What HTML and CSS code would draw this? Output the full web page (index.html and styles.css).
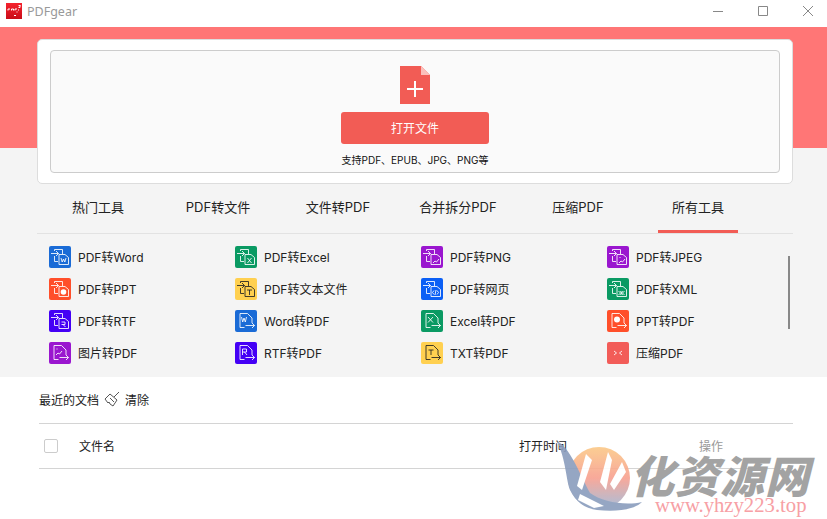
FILE: index.html
```html
<!DOCTYPE html>
<html lang="zh-CN">

<head>
    <meta charset="UTF-8">
    <title>PDFgear</title>
    <link rel="stylesheet" href="styles.css">
</head>

<body>
    <svg class="defs" width="0" height="0">
        <symbol id="to-file" viewBox="0 0 22 22">
            <path d="M2 7.500h7.500M7 5l2.500 2.500L7 10M5.500 5V3.500h8V8M5.500 10v5.500H9M10 8.500h6l3.500 3v7H10z" fill="none" stroke="currentColor" stroke-opacity="0.85"/>
        </symbol>
        <symbol id="from-file" viewBox="0 0 22 22">
            <path d="M9.500 17.500H5V3.500h7.500L17 8v5M10.500 15.500h9M17 13l2.500 2.500L17 18" fill="none" stroke="currentColor" stroke-opacity="0.85"/>
        </symbol>
    </svg>

    <header class="titlebar">
        <svg class="logo" viewBox="0 0 16 16">
            <defs>
                <linearGradient id="logo-red" x1="0" y1="0" x2="0" y2="1">
                    <stop offset="0" stop-color="#f5222d"/>
                    <stop offset="1" stop-color="#c90d18"/>
                </linearGradient>
            </defs>
            <rect width="16" height="16" fill="url(#logo-red)"/>
            <path d="M2 7.500V6h2M5.500 7.500V6h2v1.500M9 7.500V6h2M12.500 2.500h2M14 2.500v2h-1.500M12 7h1M10.500 9h1M8 12.500h2" fill="none" stroke="#fff"/>
        </svg>
        <span class="app-name">PDFgear</span>
        <div class="win-controls">
            <svg viewBox="0 0 12 12"><path d="M1 6.500h10"/></svg>
            <svg viewBox="0 0 12 12"><path d="M1.500 1.500h9v9h-9z"/></svg>
            <svg viewBox="0 0 12 12"><path d="M1 1l10 10M11 1L1 11"/></svg>
        </div>
    </header>

    <main class="top">
        <section class="card">
            <div class="drop-zone">
                <svg class="doc-icon" viewBox="0 0 30 38">
                    <path d="M0 0h21l9 9v29H0z" fill="#f25c55"/>
                    <path d="M21 0l9 9h-9z" fill="#fbc0bb"/>
                    <path d="M7 23h16M15 15v16" stroke="#fff" stroke-width="2"/>
                </svg>
                <button class="open-btn">打开文件</button>
                <p class="support">支持PDF、EPUB、JPG、PNG等</p>
            </div>
        </section>

        <nav>
            <ul class="tabs">
                <li>热门工具</li>
                <li>PDF转文件</li>
                <li>文件转PDF</li>
                <li>合并拆分PDF</li>
                <li>压缩PDF</li>
                <li class="active">所有工具</li>
            </ul>
        </nav>

        <div class="tools">
            <div class="tool">
                <svg class="tile blue" viewBox="0 0 22 22"><use href="#to-file"/><path d="M12 12l1.200 4 1.300-3 1.300 3 1.200-4" class="glyph"/></svg>
                <span>PDF转Word</span>
            </div>
            <div class="tool">
                <svg class="tile green" viewBox="0 0 22 22"><use href="#to-file"/><path d="M12.500 12l4 5M16.500 12l-4 5" class="glyph"/></svg>
                <span>PDF转Excel</span>
            </div>
            <div class="tool">
                <svg class="tile purple" viewBox="0 0 22 22"><use href="#to-file"/><path d="M12 17l2-2 1.500 1 2.500-3" class="glyph"/></svg>
                <span>PDF转PNG</span>
            </div>
            <div class="tool">
                <svg class="tile purple" viewBox="0 0 22 22"><use href="#to-file"/><path d="M12 17l2-2 1.500 1 2.500-3M12.500 11.500h1" class="glyph"/></svg>
                <span>PDF转JPEG</span>
            </div>

            <div class="tool">
                <svg class="tile orange" viewBox="0 0 22 22"><use href="#to-file"/><circle cx="14.500" cy="14" r="2.800" fill="#fff"/></svg>
                <span>PDF转PPT</span>
            </div>
            <div class="tool">
                <svg class="tile yellow" viewBox="0 0 22 22"><use href="#to-file"/><path d="M12 12h5M14.500 12v5" class="glyph"/></svg>
                <span>PDF转文本文件</span>
            </div>
            <div class="tool">
                <svg class="tile bright" viewBox="0 0 22 22"><use href="#to-file"/><path d="M13 12.500l-1.500 2 1.500 2M16 12.500l1.500 2-1.500 2M15 12l-1 5" class="glyph"/></svg>
                <span>PDF转网页</span>
            </div>
            <div class="tool">
                <svg class="tile green" viewBox="0 0 22 22"><use href="#to-file"/><path d="M11.500 13l2 2-2 2M17.500 13l-2 2 2 2M13.500 13l2 4M15.500 13l-2 4" class="glyph"/></svg>
                <span>PDF转XML</span>
            </div>

            <div class="tool">
                <svg class="tile violet" viewBox="0 0 22 22"><use href="#to-file"/><path d="M12.500 12h3.500v2.500h-3.500M14 14.500l2.500 2.500" class="glyph"/></svg>
                <span>PDF转RTF</span>
            </div>
            <div class="tool">
                <svg class="tile blue" viewBox="0 0 22 22"><use href="#from-file"/><path d="M6.500 7l1.200 5 1.300-4 1.300 4 1.200-5" class="glyph"/></svg>
                <span>Word转PDF</span>
            </div>
            <div class="tool">
                <svg class="tile green" viewBox="0 0 22 22"><use href="#from-file"/><path d="M7 7l5 5.500M12 7l-5 5.500" class="glyph"/></svg>
                <span>Excel转PDF</span>
            </div>
            <div class="tool">
                <svg class="tile orange" viewBox="0 0 22 22"><use href="#from-file"/><circle cx="10" cy="9.500" r="3" fill="#fff"/></svg>
                <span>PPT转PDF</span>
            </div>

            <div class="tool">
                <svg class="tile purple" viewBox="0 0 22 22"><use href="#from-file"/><path d="M7 13l2-2 1.500 1 2.500-3M7.500 7h1" class="glyph"/></svg>
                <span>图片转PDF</span>
            </div>
            <div class="tool">
                <svg class="tile violet" viewBox="0 0 22 22"><use href="#from-file"/><path d="M7.500 7h4v3h-4M7.500 7v6M9.500 10l2.500 3" class="glyph"/></svg>
                <span>RTF转PDF</span>
            </div>
            <div class="tool">
                <svg class="tile yellow" viewBox="0 0 22 22"><use href="#from-file"/><path d="M7.500 8h5M10 8v5" class="glyph"/></svg>
                <span>TXT转PDF</span>
            </div>
            <div class="tool">
                <svg class="tile red" viewBox="0 0 22 22"><path d="M7 9l2.500 2L7 13M15 9l-2.500 2 2.500 2" class="glyph"/></svg>
                <span>压缩PDF</span>
            </div>

            <div class="scrollbar"></div>
        </div>
    </main>

    <section class="recent">
        <div class="recent-head">
            <span>最近的文档</span>
            <svg class="broom" viewBox="0 0 16 16">
                <path d="M10 6l5-5M6 3l7 6-4 6-3-2-1-2-1 1-3-4zM6 7l4 4" fill="none" stroke="#555"/>
            </svg>
            <span>清除</span>
        </div>
        <div class="file-row">
            <span class="checkbox"></span>
            <span class="col-name">文件名</span>
            <span class="col-time">打开时间</span>
            <span class="col-action">操作</span>
        </div>
    </section>

    <!-- watermark sits over the table -->
    <div class="watermark">
        <svg class="wm-logo" viewBox="0 0 90 76">
            <defs>
                <linearGradient id="planet" x1="0" y1="0" x2="0" y2="1">
                    <stop offset="0" stop-color="#fbc987"/>
                    <stop offset="0.5" stop-color="#f8a090"/>
                    <stop offset="1" stop-color="#9fb9d8"/>
                </linearGradient>
            </defs>
            <circle cx="43" cy="38" r="31" fill="url(#planet)"/>
            <path d="M1 1C14 8 22 30 34 53 46 62 70 66 86 62 78 70 60 72 41 70 28 68 20 62 14 50 10 40 10 20 1 1z" fill="#8a9dbd"/>
            <path d="M30 14L21 46 26 50 36 20zM52 12L44 42 50 50 56 20zM66 22L54 44 58 50 70 32zM24 54L48 66 38 68 22 60z" fill="#fff"/>
        </svg>
        <div class="wm-text">
            <div class="wm-name">化资源网</div>
            <div class="wm-url">www.yhzy223.top</div>
        </div>
    </div>
</body>

</html>
```

FILE: styles.css
```css
* {
    padding: 0;
    margin: 0;
    box-sizing: border-box;
}

body {
    width: 827px;
    height: 519px;
    overflow: hidden;
    position: relative;
    background-color: white;
    color: #222;
    font-family: Inter, "Noto Sans CJK SC", sans-serif;
    font-size: 12px;
}

.defs {
    position: absolute;
}

.titlebar {
    height: 27px;
    display: flex;
    align-items: flex-start;
    padding: 3px 13px 0 6px;
}

.logo {
    width: 16px;
    height: 16px;
}

.app-name {
    margin-left: 5px;
    color: #999;
    font-family: "Noto Sans", sans-serif;
    font-size: 12.500px;
    line-height: 17px;
}

.win-controls {
    margin-left: auto;
    display: flex;
    gap: 33px;
    padding-top: 2px;
}

.win-controls svg {
    width: 12px;
    height: 12px;
    fill: none;
    stroke: #888;
}

.top {
    height: 350px;
    padding-top: 12px;
    background: linear-gradient(#ff7676 121px, #f4f4f4 121px);
}

.card {
    width: 756px;
    height: 145px;
    margin-left: 37px;
    padding: 10px 12px;
    background-color: white;
    border: 1px solid #ddd;
    border-radius: 5px;
}

.drop-zone {
    height: 123px;
    display: flex;
    flex-direction: column;
    align-items: center;
    padding-top: 15px;
    background-color: #fafafa;
    border: 1px solid #ccc;
    border-radius: 4px;
}

.doc-icon {
    width: 30px;
    height: 38px;
}

.open-btn {
    width: 148px;
    height: 32px;
    margin-top: 8px;
    padding-bottom: 2px;
    border: none;
    border-radius: 3px;
    background-color: #f25c55;
    color: white;
    font-family: inherit;
    font-size: 12px;
}

.support {
    margin-top: 8px;
    font-size: 10px;
    line-height: 16px;
    color: #111;
}

.tabs {
    list-style: none;
    display: flex;
    width: 756px;
    height: 50px;
    margin-left: 37px;
    padding-left: 1px;
    border-bottom: 1px solid #e2e2e2;
}

.tabs li {
    width: 120px;
    height: 49px;
    padding-top: 13px;
    text-align: center;
    font-size: 13px;
    line-height: 20px;
}

.tabs .active {
    width: 80px;
    margin-left: 20px;
    border-bottom: 3px solid #f25c55;
}

.tools {
    position: relative;
    display: grid;
    grid-template-columns: repeat(4, 186px);
    grid-auto-rows: 32px;
    padding: 7px 0 0 49px;
}

.tool {
    display: flex;
    align-items: center;
    gap: 7px;
}

.tool span {
    padding-bottom: 2px;
}

.tile {
    width: 22px;
    height: 22px;
    border-radius: 2px;
    color: white;
}

.glyph {
    fill: none;
    stroke: currentColor;
    stroke-opacity: 0.85;
}

.blue { background-color: #1a6bd6; }
.green { background-color: #0a9a63; }
.purple { background-color: #9a16cf; }
.orange { background-color: #ff4f2a; }
.yellow { background-color: #ffd050; color: #222; }
.violet { background-color: #4400f5; }
.bright { background-color: #0b5ff5; }
.red { background-color: #f25c58; }

.scrollbar {
    position: absolute;
    left: 788px;
    top: 22px;
    width: 2px;
    height: 73px;
    background-color: #888;
}

.recent {
    padding: 0 34px 0 39px;
}

.recent-head {
    height: 47px;
    display: flex;
    align-items: center;
    gap: 5px;
    padding-bottom: 2px;
    border-bottom: 1px solid #d4d4d4;
}

.broom {
    width: 16px;
    height: 16px;
}

.file-row {
    height: 45px;
    display: flex;
    align-items: center;
    border-bottom: 1px solid #d4d4d4;
}

.col-name,
.col-time,
.col-action {
    padding-bottom: 2px;
}

.checkbox {
    width: 14px;
    height: 14px;
    margin-left: 5px;
    border: 1px solid #ccc;
    border-radius: 2px;
}

.col-name {
    margin-left: 21px;
    width: 440px;
}

.col-time {
    width: 180px;
}

.col-action {
    color: #999;
}

.watermark {
    position: absolute;
    left: 556px;
    top: 440px;
    display: flex;
}

.wm-logo {
    width: 90px;
    height: 76px;
    opacity: 0.9;
}

.wm-text {
    margin: 15px 0 0 -16px;
}

.wm-name {
    font-family: "Noto Sans CJK SC", sans-serif;
    font-weight: 900;
    font-style: italic;
    font-size: 44px;
    line-height: 38px;
    letter-spacing: 1px;
    color: #a3a3a3;
    white-space: nowrap;
}

.wm-url {
    margin: 3px 0 0 25px;
    font-family: "Liberation Serif", serif;
    font-size: 20.700px;
    line-height: 18px;
    color: #f7a0a5;
    white-space: nowrap;
}
```
